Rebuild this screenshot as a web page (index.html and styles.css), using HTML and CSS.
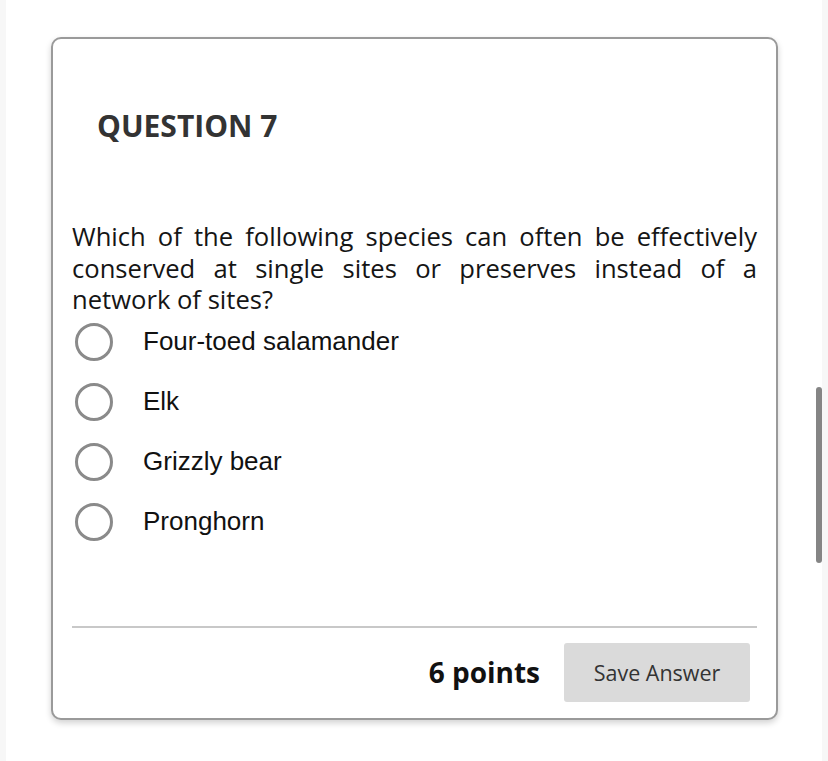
FILE: index.html
```html
<!DOCTYPE html>
<html lang="en">
<head>
<meta charset="utf-8">
<title>Question 7</title>
<link rel="stylesheet" href="styles.css">
</head>
<body>
<main class="page">
  <section class="card">
    <h2 class="title">QUESTION 7</h2>
    <p class="prompt">Which of the following species can often be effectively conserved at single sites or preserves instead of a network of sites?</p>
    <ul class="options">
      <li class="option"><span class="radio"></span><span class="label">Four-toed salamander</span></li>
      <li class="option"><span class="radio"></span><span class="label">Elk</span></li>
      <li class="option"><span class="radio"></span><span class="label">Grizzly bear</span></li>
      <li class="option"><span class="radio"></span><span class="label">Pronghorn</span></li>
    </ul>
    <div class="divider"></div>
    <div class="footer">
      <span class="points">6 points</span>
      <button class="save" type="button">Save Answer</button>
    </div>
  </section>
  <div class="scroll-thumb"></div>
</main>
</body>
</html>
```

FILE: styles.css
```css
html, body {
  margin: 0;
  padding: 0;
}
body {
  background: #f7f7f7;
  font-family: "Open Sans", "Liberation Sans", sans-serif;
}
.page {
  position: relative;
  background: #ffffff;
  margin: 0 6px;
  height: 761px;
  padding: 37px 44px 0 45px;
  box-sizing: border-box;
}
.card {
  width: 727px;
  height: 683px;
  box-sizing: border-box;
  border: 2px solid #9a9a9a;
  border-radius: 10px;
  background: #fff;
  box-shadow: 0 3px 6px rgba(0, 0, 0, 0.18);
  padding: 69px 19px 0;
}
.title {
  margin: 0 0 77px;
  padding-left: 25px;
  font-size: 30px;
  line-height: 36px;
  font-weight: 700;
  color: #333;
}
.prompt {
  margin: 0 0 6px;
  font-size: 25.6px;
  line-height: 31.5px;
  text-align: justify;
  color: #151515;
}
.options {
  list-style: none;
  margin: 0;
  padding: 0;
  display: flex;
  flex-direction: column;
  gap: 20px;
}
.option {
  display: flex;
  align-items: center;
  height: 40px;
}
.radio {
  width: 38px;
  height: 38px;
  box-sizing: border-box;
  border: 3px solid #8a8a8a;
  border-radius: 50%;
  margin-left: 3px;
  flex: none;
}
.label {
  margin-left: 30px;
  font-family: "Liberation Sans", Arial, sans-serif;
  font-size: 26px;
  color: #111;
}
.divider {
  margin-top: 84px;
  height: 2px;
  background: #c8c8c8;
}
.footer {
  display: flex;
  justify-content: flex-end;
  align-items: center;
  gap: 24px;
  padding: 15px 7px 0 0;
}
.points {
  font-size: 28px;
  font-weight: 700;
  color: #111;
}
.save {
  width: 186px;
  height: 59px;
  border: none;
  border-radius: 3px;
  background: #dadada;
  font-family: "Open Sans", "Liberation Sans", sans-serif;
  font-size: 21.5px;
  color: #333;
  padding: 0;
}
.scroll-thumb {
  position: absolute;
  left: 810px;
  top: 387px;
  width: 6px;
  height: 176px;
  border-radius: 3px;
  background: #858585;
}
```
